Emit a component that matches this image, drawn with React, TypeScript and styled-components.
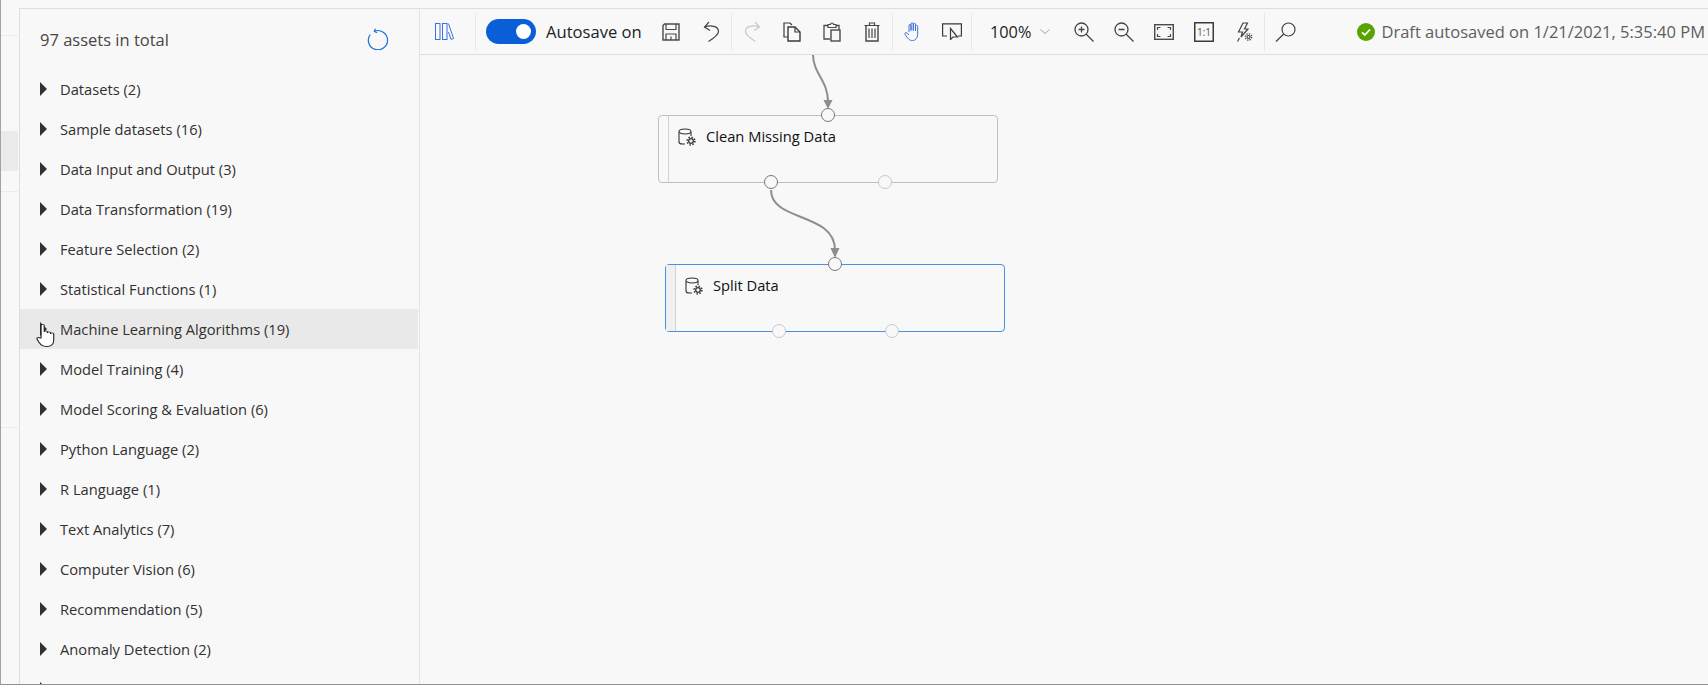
import React from "react";
import styled, { createGlobalStyle } from "styled-components";

const categories = [
  "Datasets (2)",
  "Sample datasets (16)",
  "Data Input and Output (3)",
  "Data Transformation (19)",
  "Feature Selection (2)",
  "Statistical Functions (1)",
  "Machine Learning Algorithms (19)",
  "Model Training (4)",
  "Model Scoring & Evaluation (6)",
  "Python Language (2)",
  "R Language (1)",
  "Text Analytics (7)",
  "Computer Vision (6)",
  "Recommendation (5)",
  "Anomaly Detection (2)",
  "",
];

const GlobalStyle = createGlobalStyle`
  html, body {
    margin: 0;
    padding: 0;
    background: #f8f8f8;
    overflow: hidden;
  }
  * { box-sizing: border-box; }
`;

const Page = styled.div`
  display: flex;
  width: 1708px;
  height: 685px;
  overflow: hidden;
  background: #f8f8f8;
  border-left: 1px solid #a3a3a3;
  border-bottom: 1px solid #8f8f8f;
  font-family: "Open Sans", "Noto Sans", sans-serif;
  color: #323130;
`;

const Rail = styled.nav`
  flex: 0 0 18px;
  display: flex;
  flex-direction: column;
`;

const RailBlock = styled.div<{ $height: number; $line?: boolean; $active?: boolean }>`
  flex: 0 0 ${(p) => p.$height}px;
  border-bottom: ${(p) => (p.$line ? "1px solid #ececec" : "none")};
  background: ${(p) => (p.$active ? "#ebebeb" : "transparent")};
  border-radius: ${(p) => (p.$active ? "0 2px 2px 0" : "0")};
  margin-right: 1px;
`;

const Panel = styled.aside`
  flex: 0 0 401px;
  margin-top: 8px;
  border-top: 1px solid #dedede;
  border-left: 1px solid #dedede;
  border-right: 1px solid #e4e4e4;
  overflow: hidden;
`;

const PanelHead = styled.header`
  height: 60px;
  display: flex;
  align-items: center;
  justify-content: space-between;
  padding: 0 30px 0 20px;
`;

const AssetCount = styled.h2`
  margin: 0;
  font-size: 16.5px;
  font-weight: 400;
  color: #484644;
`;

const CategoryList = styled.ul`
  list-style: none;
  margin: 0;
  padding: 0;
`;

const Category = styled.li<{ $hover?: boolean }>`
  position: relative;
  height: 40px;
  display: flex;
  align-items: center;
  gap: 13px;
  padding-left: 20px;
  font-size: 14.7px;
  background: ${(p) => (p.$hover ? "#e9e9e9" : "transparent")};
  margin-right: 1px;
`;

const Caret = styled.span`
  width: 0;
  height: 0;
  border-style: solid;
  border-width: 7px 0 7px 7px;
  border-color: transparent transparent transparent #323130;
`;

const Pointer = styled.svg`
  position: absolute;
  left: 16px;
  top: 14px;
`;

const Main = styled.main`
  flex: 1;
  margin-top: 8px;
  border-top: 1px solid #dedede;
  display: flex;
  flex-direction: column;
  min-width: 0;
`;

const Toolbar = styled.div`
  flex: 0 0 46px;
  display: flex;
  align-items: center;
  padding-left: 5px;
  border-bottom: 1px solid #dedede;
`;

const Sep = styled.span<{ $gap?: number }>`
  flex: 0 0 1px;
  height: 38px;
  background: #e6e6e6;
  margin-left: ${(p) => p.$gap ?? 0}px;
`;

const ToolButton = styled.button<{ $width?: number }>`
  flex: 0 0 ${(p) => p.$width ?? 40}px;
  height: 44px;
  padding: 0;
  border: 0;
  background: none;
  display: flex;
  align-items: center;
  justify-content: center;
  font-family: inherit;
  color: #444;
`;

const AutosaveGroup = styled.div`
  flex: 0 0 175px;
  display: flex;
  align-items: center;
  gap: 10px;
  padding-left: 10px;
  font-size: 16.6px;
  color: #201f1e;
  white-space: nowrap;
`;

const Toggle = styled.span`
  flex: 0 0 50px;
  height: 25px;
  border-radius: 13px;
  background: #0a5fd8;
  display: flex;
  align-items: center;
  justify-content: flex-end;
  padding-right: 5px;
`;

const Knob = styled.span`
  width: 15px;
  height: 15px;
  border-radius: 50%;
  background: #fff;
`;

const ZoomLevel = styled.div`
  flex: 0 0 92px;
  display: flex;
  align-items: center;
  padding-left: 18px;
  gap: 9px;
  font-size: 16.3px;
  color: #201f1e;
`;

const RatioBox = styled.span`
  width: 20px;
  height: 20px;
  border: 1px solid #3a3a3a;
  font-size: 10px;
  line-height: 18px;
  text-align: center;
  color: #555;
  box-shadow: inset 0 0 0 0.5px #3a3a3a;
`;

const Status = styled.div`
  margin-left: auto;
  display: flex;
  align-items: center;
  gap: 6px;
  padding-right: 3px;
  font-size: 16.5px;
  color: #605e5c;
  white-space: nowrap;
`;

const Canvas = styled.section`
  position: relative;
  flex: 1;
  overflow: hidden;
`;

const Wires = styled.svg`
  position: absolute;
  left: 0;
  top: 0;
`;

const Node = styled.div<{ $x: number; $y: number; $selected?: boolean }>`
  position: absolute;
  left: ${(p) => p.$x}px;
  top: ${(p) => p.$y}px;
  width: 340px;
  height: 68px;
  display: flex;
  border: 1px solid ${(p) => (p.$selected ? "#4a90e2" : "#bfbfbf")};
  border-radius: 4px;
`;

const NodeStripe = styled.span<{ $selected?: boolean }>`
  flex: 0 0 10px;
  border-right: 1px solid #d2d2d2;
  background: ${(p) => (p.$selected ? "#f0f0f0" : "transparent")};
`;

const NodeBody = styled.div`
  display: flex;
  align-items: flex-start;
  gap: 10px;
  padding: 10px 0 0 9px;
  font-size: 14.7px;
  line-height: 20px;
  color: #111;

  svg {
    margin-top: 2px;
  }
`;

const Port = styled.span<{ $x: number; $y: number; $active?: boolean }>`
  position: absolute;
  left: ${(p) => p.$x - 7}px;
  top: ${(p) => p.$y - 7}px;
  width: 14px;
  height: 14px;
  border-radius: 50%;
  background: #f8f8f8;
  border: 1px solid ${(p) => (p.$active ? "#777" : "#c8c8c8")};
`;

// the toolbar icons are plain line drawings, sized to the pixels in the shot
const Glyph = ({ w, h, color = "#444", children }: { w: number; h: number; color?: string; children: React.ReactNode }) => (
  <svg width={w} height={h} viewBox={`0 0 ${w} ${h}`} fill="none" stroke={color} strokeWidth={1.2}>
    {children}
  </svg>
);

const DbGear = () => (
  <svg width="18" height="18" viewBox="0 0 18 18" fill="none" stroke="#333" strokeWidth="1.1">
    <path d="M1 4v10c0 1.300 2 2 3.500 2H7M13 8V4" />
    <ellipse cx="7" cy="3.500" rx="6" ry="2.500" />
    <circle cx="13" cy="13" r="2.300" strokeWidth="1.300" />
    <circle cx="13" cy="13" r="3.900" strokeWidth="1.500" strokeDasharray="1.500 1.560" />
  </svg>
);

const PADS = [
  { x: 828, y: 115 - 55 },
  { x: 771, y: 182 - 55 },
  { x: 885, y: 182 - 55 },
  { x: 835, y: 264 - 55 },
  { x: 779, y: 331 - 55 },
  { x: 892, y: 331 - 55 },
];

export default function App() {
  return (
    <Page>
      <GlobalStyle />
      <Rail>
        <RailBlock $height={36} $line />
        <RailBlock $height={95} />
        <RailBlock $height={40} $active />
        <RailBlock $height={21} $line />
        <RailBlock $height={236} $line />
      </Rail>

      <Panel>
        <PanelHead>
          <AssetCount>97 assets in total</AssetCount>
          <svg width="22" height="22" viewBox="0 0 22 22" fill="none" stroke="#1a6fdc" strokeWidth="1.200">
            <path d="M7.500 3.200A9.600 9.600 0 1 1 3.200 6.500" />
            <path d="M8.500 0.800 7.300 3.300 10 4.800" />
          </svg>
        </PanelHead>
        <CategoryList>
          {categories.map((name, i) => (
            <Category key={i} $hover={i === 6}>
              <Caret />
              <span>{name}</span>
              {i === 6 && (
                <Pointer width="19" height="25" viewBox="0 0 15 25" preserveAspectRatio="none" fill="#fff" stroke="#222" strokeWidth="0.900">
                  <path d="M4 15V2.500C4 1 6.500 1 6.500 2.500V9c0-1.500 2.500-1.500 2.500 0v1c0-1.500 2.500-1.500 2.500 0v1c0-1.500 2.500-1.500 2.500 0v6c0 4-2 6.500-5.500 6.500-3.500 0-4.500-1.500-6-4L1 16.500c-.8-1.500 1-2.800 2-1.500z" />
                </Pointer>
              )}
            </Category>
          ))}
        </CategoryList>
      </Panel>

      <Main>
        <Toolbar>
          <ToolButton>
            <Glyph w={20} h={17} color="#3f6fdc">
              <rect x="0.500" y="0.500" width="4.500" height="16" strokeWidth="1" />
              <rect x="7.500" y="0.500" width="4.500" height="16" strokeWidth="1" />
              <path d="M13.500 0.600 18.600 15.500 16 16.400 13.500 9" strokeWidth="1" />
            </Glyph>
          </ToolButton>
          <Sep $gap={10} />
          <AutosaveGroup>
            <Toggle>
              <Knob />
            </Toggle>
            Autosave on
          </AutosaveGroup>
          <ToolButton>
            <Glyph w={18} h={18} color="#4a4a4a">
              <path d="M1 2.500 2.500 1H17V17H1Z" strokeWidth="1.400" />
              <path d="M4 1V6.500H14V1M4 17V11H14V17M9 13.500V17" />
            </Glyph>
          </ToolButton>
          <ToolButton>
            <Glyph w={17} h={21}>
              <path d="M6 1 1.500 6 7 9.500" />
              <path d="M1.500 6C8 3.800 15.500 5 15.500 10.500 15.500 14 11 17 5.500 20.500" />
            </Glyph>
          </ToolButton>
          <Sep />
          <ToolButton>
            <Glyph w={17} h={21} color="#c9c9c9">
              <path d="M11 1 15.500 6 10 9.500" />
              <path d="M15.500 6C9 3.800 1.500 5 1.500 10.500 1.500 14 6 17 11.500 20.500" />
            </Glyph>
          </ToolButton>
          <ToolButton>
            <Glyph w={18} h={20} color="#3a3a3a">
              <path d="M5 15H1V1H7L9 3" />
              <path d="M5 5H12L17 10V19H5Z" strokeWidth="1.400" />
              <path d="M12 5V10H17" />
            </Glyph>
          </ToolButton>
          <ToolButton>
            <Glyph w={18} h={20} color="#4a4a4a">
              <path d="M7 17H1V3.500H5M13 3.500H16V8" strokeWidth="1.300" />
              <path d="M5 5.500V2.500H7.500C7.500 .5 10.500 .5 10.500 2.500H13V5.500Z" />
              <rect x="8" y="8" width="9" height="11" strokeWidth="1.400" />
            </Glyph>
          </ToolButton>
          <ToolButton>
            <Glyph w={16} h={20} color="#444">
              <path d="M0.500 3.500H15.500M5.500 3.500V1H10.500V3.500" />
              <path d="M2 3.500V19H14V3.500" strokeWidth="1.400" />
              <path d="M5 6.500V16M8 6.500V16M11 6.500V16" />
            </Glyph>
          </ToolButton>
          <Sep />
          <ToolButton>
            <Glyph w={18} h={19} color="#3f6fdc">
              <path d="M5 10V3.500C5 2 7 2 7 3.500V8.500M7 8.500V2C7 .5 9.300 .5 9.300 2V8.500M9.300 8.500V2.500C9.300 1 11.500 1 11.500 2.500V9M11.500 9V4.500C11.500 3 13.700 3 13.700 4.500V11C13.700 15.500 12 18.500 8.500 18.500 5 18.500 4 16.500 1 12.500 .2 11 2 10 3 11L5 13" strokeWidth="1" />
            </Glyph>
          </ToolButton>
          <ToolButton $width={38}>
            <Glyph w={20} h={17} color="#3a3a3a">
              <path d="M5 13H0.600V0.800H19.400V13H16" />
              <path d="M8.500 5.500V16.500L11 14H15.500Z" />
            </Glyph>
          </ToolButton>
          <Sep />
          <ZoomLevel>
            100%
            <svg width="10" height="5" viewBox="0 0 10 5" fill="none" stroke="#a0a0a0" strokeWidth="1">
              <path d="M0.500 0.500 5 4.500 9.500 0.500" />
            </svg>
          </ZoomLevel>
          <ToolButton>
            <Glyph w={20} h={20}>
              <circle cx="7.500" cy="7.500" r="6.500" strokeWidth="1.300" />
              <path d="M12 12 19.500 19.500M4.500 7.500H10.500M7.500 4.500V10.500" strokeWidth="1.300" />
            </Glyph>
          </ToolButton>
          <ToolButton>
            <Glyph w={20} h={20}>
              <circle cx="7.500" cy="7.500" r="6.500" strokeWidth="1.300" />
              <path d="M12 12 19.500 19.500M4.500 7.500H10.500" strokeWidth="1.300" />
            </Glyph>
          </ToolButton>
          <ToolButton>
            <Glyph w={20} h={16} color="#4a4a4a">
              <rect x="0.700" y="0.700" width="18.600" height="14.600" strokeWidth="1.400" />
              <path d="M3.500 6V3.500H6.500M13.500 3.500H16.500V6M16.500 10V12.500H13.500M6.500 12.500H3.500V10" />
            </Glyph>
          </ToolButton>
          <ToolButton>
            <RatioBox>1:1</RatioBox>
          </ToolButton>
          <ToolButton>
            <Glyph w={18} h={20}>
              <path d="M8 1H12.500L9.500 7H13L6 15 7.500 10H3.500Z" />
              <path d="M2.500 19.500 4.500 16" />
              <circle cx="13.500" cy="15" r="1.500" />
              <circle cx="13.500" cy="15" r="3.200" strokeWidth="1.300" strokeDasharray="1.300 1.200" />
            </Glyph>
          </ToolButton>
          <Sep />
          <ToolButton>
            <Glyph w={21} h={20} color="#444">
              <circle cx="13.500" cy="7.500" r="6.500" strokeWidth="1.200" />
              <path d="M8.800 12 1 19.500" strokeWidth="1.200" />
            </Glyph>
          </ToolButton>
          <Status>
            <svg width="18" height="18" viewBox="0 0 18 18">
              <circle cx="9" cy="9" r="9" fill="#57a300" />
              <path d="M5 9.300 7.800 12 13 6.500" fill="none" stroke="#fff" strokeWidth="1.800" />
            </svg>
            Draft autosaved on 1/21/2021, 5:35:40 PM
          </Status>
        </Toolbar>

        <Canvas>
          <Wires width="1288" height="630" viewBox="420 55 1288 630" fill="none" stroke="#8e8e8e" strokeWidth="2">
            <path d="M813 54C813 74 828 80 828 102" />
            <path d="M771 190C771 222 835 212 835 250" />
            <path d="M823.500 100H832.500L828 109Z" fill="#8e8e8e" stroke="none" />
            <path d="M830.500 248H839.500L835 258Z" fill="#8e8e8e" stroke="none" />
          </Wires>
          <Node $x={238} $y={60}>
            <NodeStripe />
            <NodeBody>
              <DbGear />
              Clean Missing Data
            </NodeBody>
          </Node>
          <Node $x={245} $y={209} $selected>
            <NodeStripe $selected />
            <NodeBody>
              <DbGear />
              Split Data
            </NodeBody>
          </Node>
          <Port $x={393} $y={-8} $active />
          {PADS.map((pad, i) => (
            <Port key={i} $x={pad.x - 420} $y={pad.y} $active={i < 2 || i === 3} />
          ))}
        </Canvas>
      </Main>
    </Page>
  );
}
